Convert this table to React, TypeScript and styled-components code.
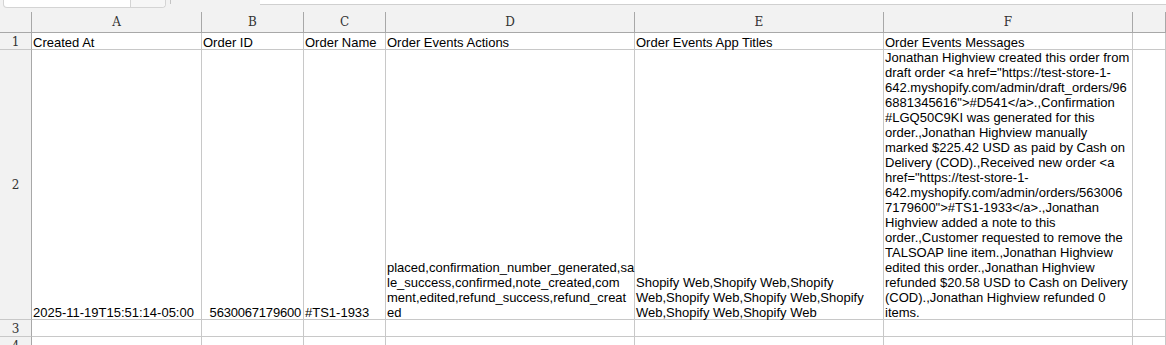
import React from 'react'
import styled, { createGlobalStyle } from 'styled-components'

const GlobalStyle = createGlobalStyle`
  html, body {
    margin: 0;
    padding: 0;
    background: #ffffff;
    overflow: hidden;
  }
`

const COLS = [170, 102, 82, 249, 249, 249]
const LETTERS = ['A', 'B', 'C', 'D', 'E', 'F', '']

const Page = styled.div`
  width: 1166px;
  height: 345px;
  overflow: hidden;
  background: #f2f2f2;
`

const TopBar = styled.div`
  height: 12px;
  display: flex;
  align-items: flex-start;
`

const NameBox = styled.div`
  margin-left: 3px;
  width: 161px;
  height: 7px;
  background: #ffffff;
  border: 1px solid #d4d4d4;
  border-top: none;
  border-radius: 0 0 4px 4px;
  display: flex;
  justify-content: flex-end;
`

const NameBoxButton = styled.div`
  width: 34px;
  height: 100%;
  border-left: 1px solid #d4d4d4;
  background: #f6f6f6;
  border-radius: 0 0 4px 0;
`

const FormulaGap = styled.div`
  margin-left: 4px;
  width: 89px;
  height: 4px;
  border-left: 1px solid #c4c4c4;
`

const FormulaInput = styled.div`
  flex: 1;
  height: 4px;
  background: #ffffff;
  border-bottom: 1px solid #d0d0d0;
`

const Grid = styled.div`
  display: grid;
  grid-template-columns: 32px ${COLS.map((c) => c + 'px').join(' ')} 1fr;
  grid-template-rows: 21px 17px 270px 17px 17px;
  font-family: 'Liberation Sans', Arial, sans-serif;
  font-size: 13px;
  color: #000000;
`

const ColHead = styled.div`
  box-sizing: border-box;
  background: #f2f2f2;
  border-right: 1px solid #a8a8a8;
  border-bottom: 1px solid #a8a8a8;
  font-family: 'DejaVu Serif', 'Liberation Serif', serif;
  font-size: 12px;
  color: #333333;
  display: flex;
  align-items: center;
  justify-content: center;
`

const RowHead = styled.div`
  box-sizing: border-box;
  background: #f2f2f2;
  border-right: 1px solid #a8a8a8;
  border-bottom: 1px solid #c8c8c8;
  font-family: 'DejaVu Serif', 'Liberation Serif', serif;
  font-size: 12px;
  color: #333333;
  display: flex;
  align-items: center;
  justify-content: center;
  padding-top: 1px;
`

const Cell = styled.div<{ $num?: boolean }>`
  box-sizing: border-box;
  background: #ffffff;
  border-right: 1px solid #c8c8c8;
  border-bottom: 1px solid #c8c8c8;
  padding: 0 2px 0 1px;
  line-height: 15px;
  white-space: nowrap;
  display: flex;
  flex-direction: column;
  justify-content: flex-end;
  align-items: ${(p) => (p.$num ? 'flex-end' : 'flex-start')};
`

const CellText = styled.div<{ $num?: boolean }>`
  display: flex;
  flex-direction: column;
  align-items: ${(p) => (p.$num ? 'flex-end' : 'flex-start')};
  margin-bottom: -1px;
  letter-spacing: ${(p) => (p.$num ? '-0.2px' : '0')};
`

type Row = { n: number; cells: (string[] | null)[]; num?: number[] }

const ROWS: Row[] = [
  {
    n: 1,
    cells: [
      ['Created At'],
      ['Order ID'],
      ['Order Name'],
      ['Order Events Actions'],
      ['Order Events App Titles'],
      ['Order Events Messages'],
      null,
    ],
  },
  {
    n: 2,
    num: [1],
    cells: [
      ['2025-11-19T15:51:14-05:00'],
      ['5630067179600'],
      ['#TS1-1933'],
      [
        'placed,confirmation_number_generated,sa',
        'le_success,confirmed,note_created,com',
        'ment,edited,refund_success,refund_creat',
        'ed',
      ],
      [
        'Shopify Web,Shopify Web,Shopify',
        'Web,Shopify Web,Shopify Web,Shopify',
        'Web,Shopify Web,Shopify Web',
      ],
      [
        'Jonathan Highview created this order from',
        'draft order <a href="https://test-store-1-',
        '642.myshopify.com/admin/draft_orders/96',
        '6881345616">#D541</a>.,Confirmation',
        '#LGQ50C9KI was generated for this',
        'order.,Jonathan Highview manually',
        'marked $225.42 USD as paid by Cash on',
        'Delivery (COD).,Received new order <a',
        'href="https://test-store-1-',
        '642.myshopify.com/admin/orders/563006',
        '7179600">#TS1-1933</a>.,Jonathan',
        'Highview added a note to this',
        'order.,Customer requested to remove the',
        'TALSOAP line item.,Jonathan Highview',
        'edited this order.,Jonathan Highview',
        'refunded $20.58 USD to Cash on Delivery',
        '(COD).,Jonathan Highview refunded 0',
        'items.',
      ],
      null,
    ],
  },
  { n: 3, cells: [null, null, null, null, null, null, null] },
  { n: 4, cells: [null, null, null, null, null, null, null] },
]

const App: React.FC = () => {
  return (
    <Page>
      <GlobalStyle />
      <TopBar>
        <NameBox>
          <NameBoxButton />
        </NameBox>
        <FormulaGap />
        <FormulaInput />
      </TopBar>
      <Grid>
        <ColHead />
        {LETTERS.map((l, i) => (
          <ColHead key={'h' + i}>{l}</ColHead>
        ))}
        {ROWS.map((row) => (
          <React.Fragment key={row.n}>
            <RowHead>{row.n}</RowHead>
            {row.cells.map((lines, i) => {
              const num = row.num?.includes(i)
              return (
                <Cell key={i} $num={num}>
                  {lines && (
                    <CellText $num={num}>
                      {lines.map((t, j) => <span key={j}>{t}</span>)}
                    </CellText>
                  )}
                </Cell>
              )
            })}
          </React.Fragment>
        ))}
      </Grid>
    </Page>
  )
}

export default App
